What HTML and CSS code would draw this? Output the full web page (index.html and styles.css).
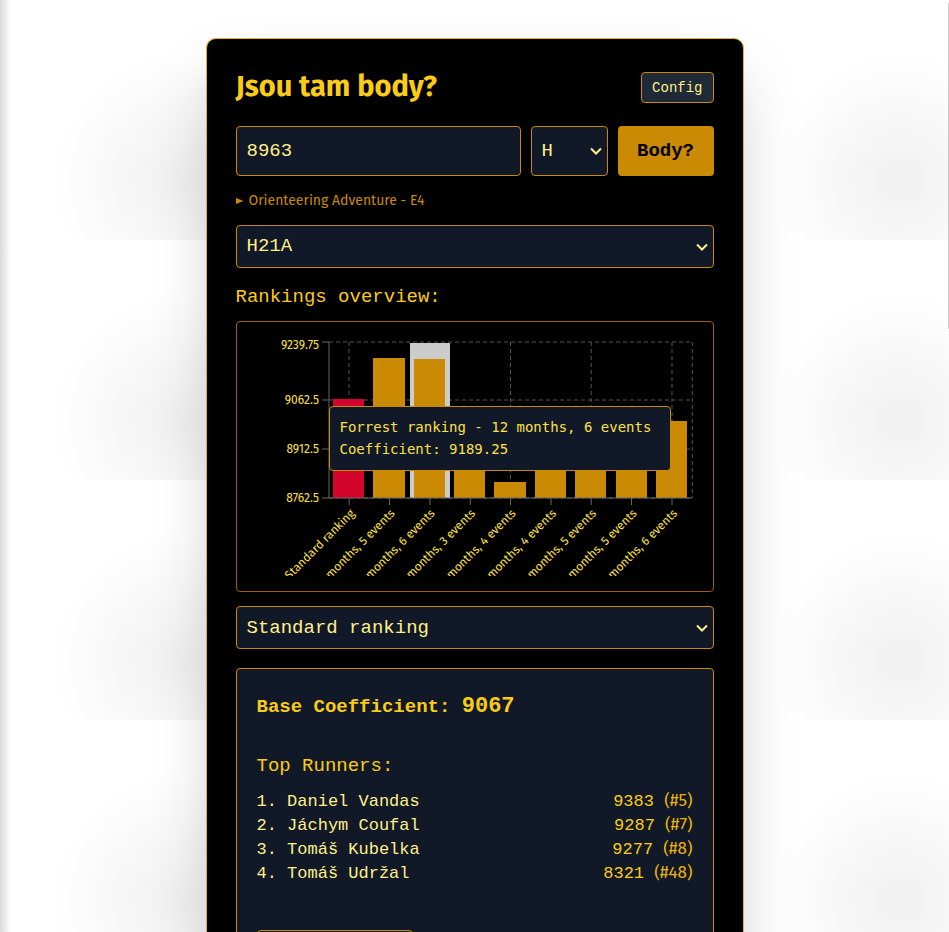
FILE: index.html
```
<!DOCTYPE html>
<html lang="cs">
<head>
<meta charset="utf-8">
<meta name="viewport" content="width=device-width, initial-scale=1">
<title>Jsou tam body?</title>
<link rel="stylesheet" href="styles.css">
</head>
<body>
<main class="card">
  <header class="head">
    <h1>Jsou tam body?</h1>
    <button class="config" type="button">Config</button>
  </header>
  <form class="search">
    <input class="field race" type="text" value="8963" aria-label="Race ID">
    <div class="pick gender">
      <select class="field" aria-label="Gender"><option>H</option><option>D</option></select>
      <svg class="chev" viewBox="0 0 12 8" aria-hidden="true"><path d="M1 1.5 6 6.5 11 1.5"/></svg>
    </div>
    <button class="submit" type="button">Body?</button>
  </form>
  <details class="event">
    <summary><svg class="marker" viewBox="0 0 8 8" aria-hidden="true"><path d="M0 1 7.500 4 0 7Z"/></svg>Orienteering Adventure - E4</summary>
  </details>
  <div class="pick category">
    <select class="field" aria-label="Category"><option>H21A</option></select>
    <svg class="chev" viewBox="0 0 12 8" aria-hidden="true"><path d="M1 1.5 6 6.5 11 1.5"/></svg>
  </div>
  <h2>Rankings overview:</h2>
  <section class="chart">
    <svg class="plot" viewBox="0 0 456 240" role="img" aria-label="Coefficient by ranking">
      <g class="grid">
        <path d="M82 6H445M82 64H445M82 113H445M82 162H445"/>
        <path d="M102 6V162M263.500 6V162M344.200 6V162M425 6V162M445.300 6V162"/>
      </g>
      <rect class="cursor" x="163" y="7" width="40" height="155"/>
      <g class="bars">
        <rect class="base" x="86" y="63" width="31" height="99"/>
        <rect x="126" y="22" width="32" height="140"/>
        <rect x="167" y="23" width="31" height="139"/>
        <rect x="207" y="120" width="31" height="42"/>
        <rect x="247" y="146" width="32" height="16"/>
        <rect x="288" y="120" width="31" height="42"/>
        <rect x="328" y="120" width="31" height="42"/>
        <rect x="369" y="120" width="31" height="42"/>
        <rect x="409" y="85" width="31" height="77"/>
      </g>
      <g class="axis">
        <path d="M82 6V162M75 6H82M75 64H82M75 113H82M75 162H445"/>
        <path d="M102.200 162v7M142.500 162v7M183 162v7M223.300 162v7M263.500 162v7M304 162v7M344.200 162v7M384.500 162v7M425 162v7"/>
      </g>
      <g class="ylabels">
        <text x="72" y="13">9239.75</text>
        <text x="72" y="68">9062.5</text>
        <text x="72" y="117">8912.5</text>
        <text x="72" y="166">8762.5</text>
      </g>
      <g class="xlabels">
        <text transform="translate(108.500 178) rotate(-45)">Standard ranking</text>
        <text transform="translate(148.500 178) rotate(-45)">months, 5 events</text>
        <text transform="translate(188.500 178) rotate(-45)">months, 6 events</text>
        <text transform="translate(229 178) rotate(-45)">months, 3 events</text>
        <text transform="translate(269.500 178) rotate(-45)">months, 4 events</text>
        <text transform="translate(310 178) rotate(-45)">months, 4 events</text>
        <text transform="translate(350 178) rotate(-45)">months, 5 events</text>
        <text transform="translate(390.500 178) rotate(-45)">months, 5 events</text>
        <text transform="translate(431 178) rotate(-45)">months, 6 events</text>
      </g>
    </svg>
    <div class="tip"><p>Forrest ranking - 12 months, 6 events</p><p>Coefficient: 9189.25</p></div>
  </section>
  <div class="pick ranking">
    <select class="field" aria-label="Ranking"><option>Standard ranking</option></select>
    <svg class="chev" viewBox="0 0 12 8" aria-hidden="true"><path d="M1 1.5 6 6.5 11 1.5"/></svg>
  </div>
  <section class="result">
    <p class="coef">Base Coefficient: <strong>9067</strong></p>
    <h2>Top Runners:</h2>
    <ol class="runners">
      <li><span>1. Daniel Vandas</span><span class="pts">9383 <span class="rank">(#5)</span></span></li>
      <li><span>2. Jáchym Coufal</span><span class="pts">9287 <span class="rank">(#7)</span></span></li>
      <li><span>3. Tomáš Kubelka</span><span class="pts">9277 <span class="rank">(#8)</span></span></li>
      <li><span>4. Tomáš Udržal</span><span class="pts">8321 <span class="rank">(#48)</span></span></li>
    </ol>
    <button class="more" type="button" aria-label="More"></button>
  </section>
</main>
<div class="scroll-thumb"></div>
</body>
</html>
```
FILE: styles.css
```
* { box-sizing: border-box; }

:root {
  --sans: "Fira Sans", "Noto Sans", sans-serif;
  --mono: "Liberation Mono", monospace;
  --edge: #ca8a04;
  --panel: #111827;
  --text: #fef08a;
  --gold: #facc15;
}

html { overflow: hidden; }

body {
  margin: 0;
  height: 100vh;
  overflow: hidden;
  padding: 38px 20px;
  font-family: var(--mono);
  font-size: 19px;
  line-height: 28px;
  color: var(--gold);
  background:
    linear-gradient(90deg, rgba(0, 0, 0, .14), transparent 11px),
    radial-gradient(circle at 75% 75%, #f0f0f0, #fff 50%) 0 0 / 240px 240px,
    #fff;
}

h1, h2, p, ol { margin: 0; padding: 0; }

.card {
  max-width: 538px;
  margin: 0 auto;
  padding: 29px;
  background: #000;
  border: 1px solid #eab308;
  border-radius: 10px;
  box-shadow: 0 30px 60px -14px rgba(0, 0, 0, .25);
}

.scroll-thumb {
  position: fixed;
  top: 3px;
  right: 0;
  width: 1px;
  height: 35vh;
  background: #ccc;
}

.head {
  display: flex;
  align-items: center;
  justify-content: space-between;
  height: 38px;
  margin-bottom: 20px;
}

h1 {
  font: 700 29px/38px var(--sans);
}

h2 {
  font-size: 19px;
  font-weight: 400;
  line-height: 28px;
}

button, input, select { font-family: inherit; }

.config {
  height: 31px;
  padding: 1px 10px 0;
  font-size: 14px;
  color: var(--text);
  background: #1f2937;
  border: 1px solid var(--edge);
  border-radius: 4px;
}

.search {
  display: grid;
  grid-template-columns: 1fr 77px 96px;
  gap: 10px;
  height: 50px;
}

.field {
  width: 100%;
  height: 100%;
  padding: 0 10px;
  font-size: 19px;
  color: var(--text);
  background: var(--panel);
  border: 1px solid var(--edge);
  border-radius: 4px;
  appearance: none;
}

.race { min-width: 0; }

.pick {
  position: relative;
  height: 43px;
}

.gender { height: 50px; }

.chev {
  position: absolute;
  right: 6px;
  top: calc(50% - 4px);
  width: 12px;
  height: 8px;
  fill: none;
  stroke: var(--text);
  stroke-width: 2;
}

.submit {
  font-size: 19px;
  font-weight: 700;
  color: #000;
  background: var(--edge);
  border: 0;
  border-radius: 4px;
}

.event {
  margin: 15px 0 14px;
  font: 14px/20px var(--sans);
  color: var(--edge);
}

.event summary {
  display: flex;
  align-items: center;
  gap: 5px;
}

.marker {
  width: 8px;
  height: 8px;
  fill: currentColor;
}

.category { margin-bottom: 15px; }

.category .field { padding-bottom: 2px; }

.chart {
  position: relative;
  margin: 10px 0 14px;
  padding: 14px 10px 15px;
  border: 1px solid #a16207;
  border-radius: 4px;
}

.plot {
  display: block;
  width: 100%;
  overflow: hidden;
}

.grid path {
  fill: none;
  stroke: #555;
  stroke-dasharray: 4 3;
}

.axis path {
  fill: none;
  stroke: #666;
}

.cursor { fill: #ccc; }
.bars { fill: #ca8a04; }
.bars .base { fill: #d4052d; }

.ylabels, .xlabels {
  font-family: var(--sans);
  font-size: 12px;
  fill: #fde047;
  text-anchor: end;
}

.tip {
  position: absolute;
  left: 92px;
  top: 84px;
  min-width: 342px;
  padding: 9px 10px 10px;
  font: 14px/22px "DejaVu Sans Mono", monospace;
  color: #fde047;
  white-space: nowrap;
  background: var(--panel);
  border: 1px solid var(--edge);
  border-radius: 4px;
}

.result {
  margin-top: 19px;
  padding: 20px;
  background: var(--panel);
  border: 1px solid var(--edge);
  border-radius: 4px;
}

.coef {
  margin: 4px 0 31px;
  font-weight: 700;
}

.coef strong { font-size: 22px; }

.runners {
  margin: 10px 0 44px;
  list-style: none;
  font-size: 17px;
  line-height: 24px;
  color: var(--text);
}

.runners li {
  display: flex;
  justify-content: space-between;
}

.pts { color: var(--gold); }

.rank {
  font-family: var(--sans);
  line-height: 20px;
  color: #eab308;
}

.more {
  display: block;
  width: 156px;
  height: 43px;
  background: var(--panel);
  border: 1px solid var(--edge);
  border-radius: 4px;
}
```
